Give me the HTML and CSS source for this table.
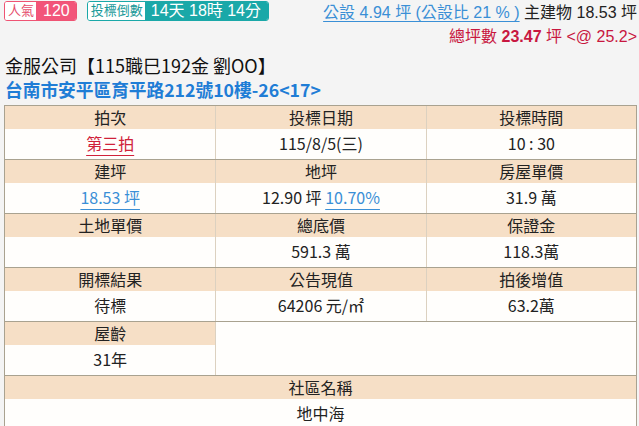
FILE: index.html
```html
<!DOCTYPE html>
<html lang="zh-Hant">
<head>
<meta charset="utf-8">
<title>拍賣物件</title>
<link rel="stylesheet" href="styles.css">
</head>
<body>
<div class="top">
  <div class="badges">
    <span class="badge pink"><span class="badge-label">人氣</span><span class="badge-value">120</span></span>
    <span class="badge teal"><span class="badge-label">投標倒數</span><span class="badge-value">14天 18時 14分</span></span>
  </div>
  <div class="area">
    <div class="area-line"><a class="pub-link" href="#">公設 4.94 坪 (公設比 21 % )</a> 主建物 18.53 坪</div>
    <div class="area-line total">總坪數 <b>23.47</b> 坪 &lt;@ 25.2&gt;</div>
  </div>
</div>
<div class="title">金服公司【115職巳192金 劉OO】</div>
<a class="addr" href="#">台南市安平區育平路212號10樓-26&lt;17&gt;</a>
<div class="table">
  <div class="row">
    <div class="cell"><div class="th">拍次</div><div class="td"><a class="red-link" href="#">第三拍</a></div></div>
    <div class="cell"><div class="th">投標日期</div><div class="td">115/8/5(三)</div></div>
    <div class="cell"><div class="th">投標時間</div><div class="td">10 : 30</div></div>
  </div>
  <div class="row">
    <div class="cell"><div class="th">建坪</div><div class="td"><a class="blue-link" href="#">18.53 坪</a></div></div>
    <div class="cell"><div class="th">地坪</div><div class="td">12.90 坪 <a class="blue-link" href="#">10.70%</a></div></div>
    <div class="cell"><div class="th">房屋單價</div><div class="td">31.9 萬</div></div>
  </div>
  <div class="row">
    <div class="cell"><div class="th">土地單價</div><div class="td"></div></div>
    <div class="cell"><div class="th">總底價</div><div class="td">591.3 萬</div></div>
    <div class="cell"><div class="th">保證金</div><div class="td">118.3萬</div></div>
  </div>
  <div class="row">
    <div class="cell"><div class="th">開標結果</div><div class="td">待標</div></div>
    <div class="cell"><div class="th">公告現值</div><div class="td">64206 元/㎡</div></div>
    <div class="cell"><div class="th">拍後增值</div><div class="td">63.2萬</div></div>
  </div>
  <div class="row">
    <div class="cell"><div class="th">屋齡</div><div class="td">31年</div></div>
    <div class="cell span2"></div>
  </div>
  <div class="row">
    <div class="cell span3"><div class="th">社區名稱</div><div class="td">地中海</div></div>
  </div>
</div>
</body>
</html>
```

FILE: styles.css
```css
html, body {
  margin: 0;
  padding: 0;
}
body {
  background: #f4f4f4;
  font-family: "Noto Sans CJK TC", "Noto Sans", sans-serif;
  color: #222;
  padding: 0 2px 0 4px;
  overflow: hidden;
}
a {
  text-decoration: none;
}
.top {
  display: flex;
  justify-content: space-between;
  align-items: flex-start;
  height: 53px;
}
.badges {
  display: flex;
  gap: 10px;
  padding-top: 1px;
}
.badge {
  display: flex;
  height: 20px;
  border-radius: 3px;
  overflow: hidden;
  border: 1px solid;
  box-sizing: border-box;
  font-family: "Liberation Sans", "Noto Sans CJK TC", sans-serif;
}
.badge-label {
  background: #fff;
  font-size: 13px;
  line-height: 18px;
  padding: 0 2px 0 3px;
}
.badge-value {
  color: #fff;
  font-size: 16px;
  line-height: 18px;
}
.pink {
  border-color: #ef5373;
}
.pink .badge-label {
  color: #e54c6c;
}
.pink .badge-value {
  background: #f2557a;
  padding: 0 6px 0 7px;
}
.teal {
  border-color: #1aa8a8;
}
.teal .badge-label {
  color: #1a9a9a;
}
.teal .badge-value {
  background: #1aa8a8;
  padding: 0 7px 0 6px;
}
.area {
  display: flex;
  flex-direction: column;
  align-items: flex-end;
  font-family: "Liberation Sans", "Noto Sans CJK TC", sans-serif;
  padding-top: 1px;
}
.area-line {
  font-size: 16px;
  line-height: 24px;
  white-space: nowrap;
}
.pub-link {
  color: #3a8fd6;
  text-decoration: underline;
  text-underline-offset: 3px;
}
.area-line.total {
  color: #c8173f;
}
.total b {
  font-weight: bold;
}
.title {
  font-size: 18px;
  line-height: 24px;
  padding-left: 1px;
  color: #111;
}
.addr {
  display: block;
  font-size: 17.7px;
  font-weight: bold;
  line-height: 25px;
  color: #1f7dd6;
  padding-left: 1px;
  margin-bottom: 3px;
}
.table {
  border: 1px solid #a9a290;
  border-bottom: none;
  background: #fffefc;
  width: 633px;
  box-sizing: border-box;
  font-size: 16px;
  color: #222;
}
.row {
  display: grid;
  grid-template-columns: 1fr 1fr 1fr;
  border-top: 1px solid #a9a290;
}
.row:first-child {
  border-top: none;
}
.cell + .cell {
  border-left: 1px solid #dcd1c0;
}
.span2 {
  grid-column: span 2;
}
.span3 {
  grid-column: span 3;
}
.th {
  background: #f6dfc6;
  height: 23px;
  line-height: 23px;
  text-align: center;
}
.td {
  height: 30px;
  line-height: 28px;
  text-align: center;
}
.red-link {
  color: #d0213a;
  text-decoration: underline;
  text-underline-offset: 5px;
}
.blue-link {
  color: #3a8fd6;
  text-decoration: underline;
  text-underline-offset: 5px;
}
```
